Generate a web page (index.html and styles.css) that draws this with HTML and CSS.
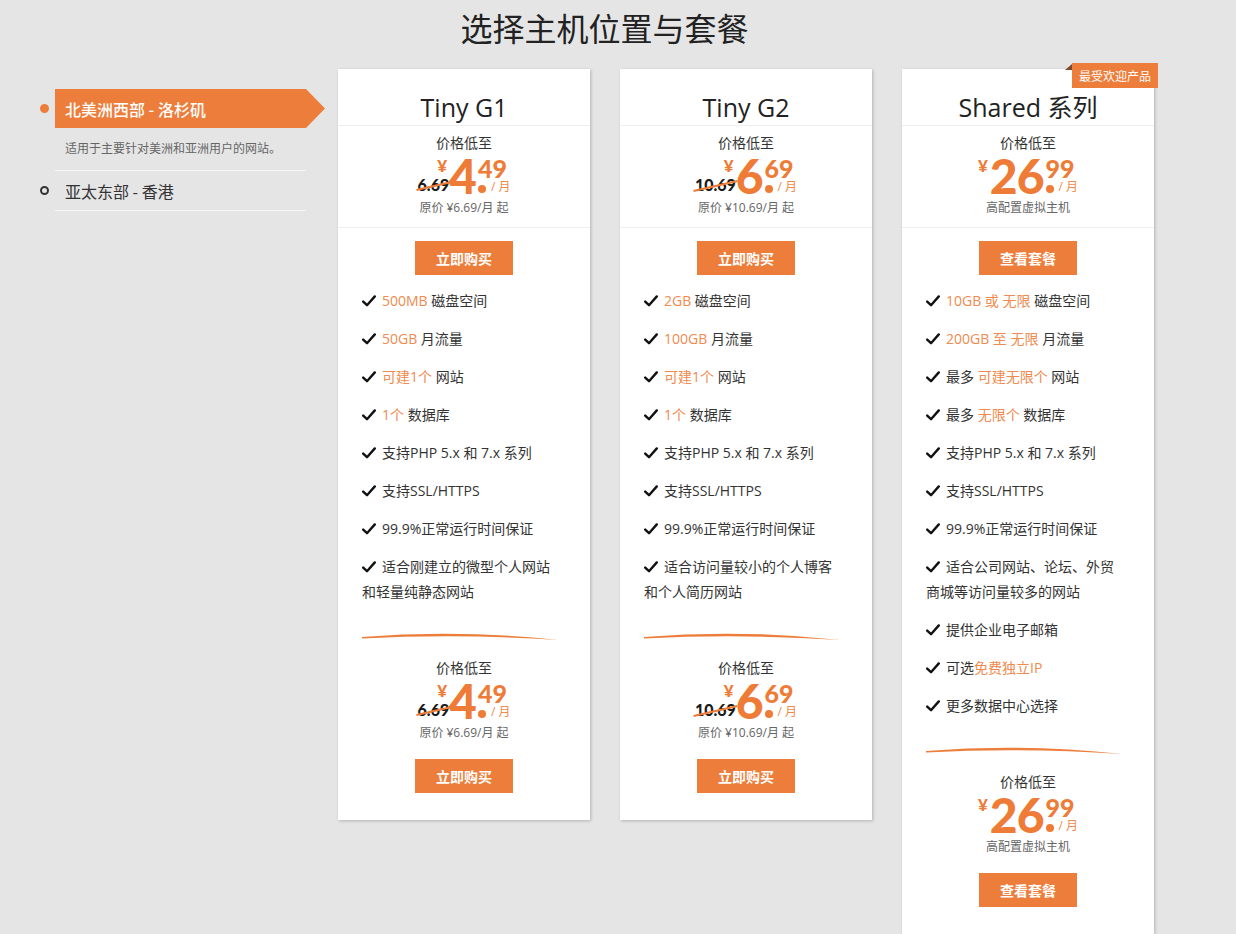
FILE: index.html
```html
<!DOCTYPE html>
<html lang="zh-CN">
<head>
<meta charset="utf-8">
<title>选择主机位置与套餐</title>
<link rel="stylesheet" href="styles.css">
</head>
<body>
<div class="page">
  <h1 class="title">选择主机位置与套餐</h1>
  <div class="main">
    <aside class="regions">
      <div class="region active">
        <div class="region-head"><span class="dot"></span><span class="tab">北美洲西部 - 洛杉矶</span></div>
        <p class="region-desc">适用于主要针对美洲和亚洲用户的网站。</p>
      </div>
      <div class="region">
        <div class="region-head"><span class="dot"></span><span class="name">亚太东部 - 香港</span></div>
      </div>
    </aside>

    <div class="cards">
      <!-- Card 1 -->
      <section class="card">
        <h2 class="card-title">Tiny G1</h2>
        <div class="price-box top">
          <div class="price-label">价格低至</div>
          <div class="price">
            <span class="old">6.69</span><span class="yen">¥</span><span class="int">4</span><span class="frac"><span class="dec">49</span><span class="unit"><i class="pt"></i>/ 月</span></span>
          </div>
          <div class="price-note">原价 ¥6.69/月 起</div>
        </div>
        <div class="btn-row"><a class="btn">立即购买</a></div>
        <ul class="features">
          <li><svg class="chk" viewBox="0 0 14 12"><path d="M1.2 6.6 L5 10.2 L12.8 1.4"/></svg><span class="hl">500MB</span> 磁盘空间</li>
          <li><svg class="chk" viewBox="0 0 14 12"><path d="M1.2 6.6 L5 10.2 L12.8 1.4"/></svg><span class="hl">50GB</span> 月流量</li>
          <li><svg class="chk" viewBox="0 0 14 12"><path d="M1.2 6.6 L5 10.2 L12.8 1.4"/></svg><span class="hl">可建1个</span> 网站</li>
          <li><svg class="chk" viewBox="0 0 14 12"><path d="M1.2 6.6 L5 10.2 L12.8 1.4"/></svg><span class="hl">1个</span> 数据库</li>
          <li><svg class="chk" viewBox="0 0 14 12"><path d="M1.2 6.6 L5 10.2 L12.8 1.4"/></svg>支持PHP 5.x 和 7.x 系列</li>
          <li><svg class="chk" viewBox="0 0 14 12"><path d="M1.2 6.6 L5 10.2 L12.8 1.4"/></svg>支持SSL/HTTPS</li>
          <li><svg class="chk" viewBox="0 0 14 12"><path d="M1.2 6.6 L5 10.2 L12.8 1.4"/></svg>99.9%正常运行时间保证</li>
          <li><svg class="chk" viewBox="0 0 14 12"><path d="M1.2 6.6 L5 10.2 L12.8 1.4"/></svg>适合刚建立的微型个人网站<br>和轻量纯静态网站</li>
        </ul>
        <svg class="swoosh" viewBox="0 0 196 10"><path d="M0 6 Q 96 -2 196 9 Q 96 2.5 0 7.5 Z"/></svg>
        <div class="price-box bottom">
          <div class="price-label">价格低至</div>
          <div class="price">
            <span class="old">6.69</span><span class="yen">¥</span><span class="int">4</span><span class="frac"><span class="dec">49</span><span class="unit"><i class="pt"></i>/ 月</span></span>
          </div>
          <div class="price-note">原价 ¥6.69/月 起</div>
        </div>
        <div class="btn-row bottom"><a class="btn">立即购买</a></div>
      </section>

      <!-- Card 2 -->
      <section class="card">
        <h2 class="card-title">Tiny G2</h2>
        <div class="price-box top">
          <div class="price-label">价格低至</div>
          <div class="price">
            <span class="old">10.69</span><span class="yen">¥</span><span class="int">6</span><span class="frac"><span class="dec">69</span><span class="unit"><i class="pt"></i>/ 月</span></span>
          </div>
          <div class="price-note">原价 ¥10.69/月 起</div>
        </div>
        <div class="btn-row"><a class="btn">立即购买</a></div>
        <ul class="features">
          <li><svg class="chk" viewBox="0 0 14 12"><path d="M1.2 6.6 L5 10.2 L12.8 1.4"/></svg><span class="hl">2GB</span> 磁盘空间</li>
          <li><svg class="chk" viewBox="0 0 14 12"><path d="M1.2 6.6 L5 10.2 L12.8 1.4"/></svg><span class="hl">100GB</span> 月流量</li>
          <li><svg class="chk" viewBox="0 0 14 12"><path d="M1.2 6.6 L5 10.2 L12.8 1.4"/></svg><span class="hl">可建1个</span> 网站</li>
          <li><svg class="chk" viewBox="0 0 14 12"><path d="M1.2 6.6 L5 10.2 L12.8 1.4"/></svg><span class="hl">1个</span> 数据库</li>
          <li><svg class="chk" viewBox="0 0 14 12"><path d="M1.2 6.6 L5 10.2 L12.8 1.4"/></svg>支持PHP 5.x 和 7.x 系列</li>
          <li><svg class="chk" viewBox="0 0 14 12"><path d="M1.2 6.6 L5 10.2 L12.8 1.4"/></svg>支持SSL/HTTPS</li>
          <li><svg class="chk" viewBox="0 0 14 12"><path d="M1.2 6.6 L5 10.2 L12.8 1.4"/></svg>99.9%正常运行时间保证</li>
          <li><svg class="chk" viewBox="0 0 14 12"><path d="M1.2 6.6 L5 10.2 L12.8 1.4"/></svg>适合访问量较小的个人博客<br>和个人简历网站</li>
        </ul>
        <svg class="swoosh" viewBox="0 0 196 10"><path d="M0 6 Q 96 -2 196 9 Q 96 2.5 0 7.5 Z"/></svg>
        <div class="price-box bottom">
          <div class="price-label">价格低至</div>
          <div class="price">
            <span class="old">10.69</span><span class="yen">¥</span><span class="int">6</span><span class="frac"><span class="dec">69</span><span class="unit"><i class="pt"></i>/ 月</span></span>
          </div>
          <div class="price-note">原价 ¥10.69/月 起</div>
        </div>
        <div class="btn-row bottom"><a class="btn">立即购买</a></div>
      </section>

      <!-- Card 3 -->
      <section class="card featured">
        <span class="badge">最受欢迎产品</span>
        <h2 class="card-title">Shared 系列</h2>
        <div class="price-box top">
          <div class="price-label">价格低至</div>
          <div class="price">
            <span class="yen">¥</span><span class="int">26</span><span class="frac"><span class="dec">99</span><span class="unit"><i class="pt"></i>/ 月</span></span>
          </div>
          <div class="price-note">高配置虚拟主机</div>
        </div>
        <div class="btn-row"><a class="btn">查看套餐</a></div>
        <ul class="features">
          <li><svg class="chk" viewBox="0 0 14 12"><path d="M1.2 6.6 L5 10.2 L12.8 1.4"/></svg><span class="hl">10GB 或 无限</span> 磁盘空间</li>
          <li><svg class="chk" viewBox="0 0 14 12"><path d="M1.2 6.6 L5 10.2 L12.8 1.4"/></svg><span class="hl">200GB 至 无限</span> 月流量</li>
          <li><svg class="chk" viewBox="0 0 14 12"><path d="M1.2 6.6 L5 10.2 L12.8 1.4"/></svg>最多 <span class="hl">可建无限个</span> 网站</li>
          <li><svg class="chk" viewBox="0 0 14 12"><path d="M1.2 6.6 L5 10.2 L12.8 1.4"/></svg>最多 <span class="hl">无限个</span> 数据库</li>
          <li><svg class="chk" viewBox="0 0 14 12"><path d="M1.2 6.6 L5 10.2 L12.8 1.4"/></svg>支持PHP 5.x 和 7.x 系列</li>
          <li><svg class="chk" viewBox="0 0 14 12"><path d="M1.2 6.6 L5 10.2 L12.8 1.4"/></svg>支持SSL/HTTPS</li>
          <li><svg class="chk" viewBox="0 0 14 12"><path d="M1.2 6.6 L5 10.2 L12.8 1.4"/></svg>99.9%正常运行时间保证</li>
          <li><svg class="chk" viewBox="0 0 14 12"><path d="M1.2 6.6 L5 10.2 L12.8 1.4"/></svg>适合公司网站、论坛、外贸<br>商城等访问量较多的网站</li>
          <li><svg class="chk" viewBox="0 0 14 12"><path d="M1.2 6.6 L5 10.2 L12.8 1.4"/></svg>提供企业电子邮箱</li>
          <li><svg class="chk" viewBox="0 0 14 12"><path d="M1.2 6.6 L5 10.2 L12.8 1.4"/></svg>可选<span class="hl">免费独立IP</span></li>
          <li><svg class="chk" viewBox="0 0 14 12"><path d="M1.2 6.6 L5 10.2 L12.8 1.4"/></svg>更多数据中心选择</li>
        </ul>
        <svg class="swoosh" viewBox="0 0 196 10"><path d="M0 6 Q 96 -2 196 9 Q 96 2.5 0 7.5 Z"/></svg>
        <div class="price-box bottom">
          <div class="price-label">价格低至</div>
          <div class="price">
            <span class="yen">¥</span><span class="int">26</span><span class="frac"><span class="dec">99</span><span class="unit"><i class="pt"></i>/ 月</span></span>
          </div>
          <div class="price-note">高配置虚拟主机</div>
        </div>
        <div class="btn-row bottom"><a class="btn">查看套餐</a></div>
      </section>
    </div>
  </div>
</div>
</body>
</html>
```

FILE: styles.css
```css
* { box-sizing: border-box; }

html, body {
  margin: 0;
  padding: 0;
  background: #e5e5e5;
}

body {
  font-family: "Open Sans", "Noto Sans CJK SC", sans-serif;
  color: #333;
  font-size: 14px;
}

.page {
  width: 1236px;
}

.title {
  margin: 0;
  padding: 7px 27px 0 0;
  height: 69px;
  font-family: "Noto Sans CJK SC", sans-serif;
  font-weight: 400;
  font-size: 32px;
  line-height: 40px;
  color: #222;
  text-align: center;
}

.main {
  display: flex;
  align-items: flex-start;
}

/* ---------- regions sidebar ---------- */
.regions {
  width: 338px;
  padding: 20px 0 0 55px;
}

.region {
  width: 251px;
  border-bottom: 1px solid #f7f7f7;
}

.region-head {
  display: flex;
  align-items: center;
  height: 39px;
  margin-left: -15px;
}

.dot {
  width: 9px;
  height: 9px;
  border-radius: 50%;
  margin-right: 6px;
  flex: none;
  border: 2px solid #333;
}

.region.active .dot {
  background: #ed7d3a;
  border-color: #ed7d3a;
}

.tab {
  display: flex;
  align-items: center;
  width: 270px;
  height: 39px;
  padding-left: 10px;
  margin-right: -19px;
  background: #ed7d3a;
  color: #fff;
  font-family: "Noto Sans CJK SC", sans-serif;
  font-size: 16px;
  font-weight: 500;
  clip-path: polygon(0 0, 251px 0, 100% 50%, 251px 100%, 0 100%);
}

.name {
  padding-left: 10px;
  font-family: "Noto Sans CJK SC", sans-serif;
  font-size: 16px;
  color: #333;
}

.region-desc {
  margin: 0;
  padding: 11px 0 13px 10px;
  font-family: "Noto Sans CJK SC", sans-serif;
  font-size: 12px;
  line-height: 18px;
  color: #666;
}

/* ---------- cards ---------- */
.cards {
  display: flex;
  align-items: flex-start;
  gap: 30px;
}

.card {
  position: relative;
  width: 252px;
  background: #fff;
  box-shadow: 1px 1px 3px rgba(0, 0, 0, 0.22);
  padding-bottom: 27px;
}

.card-title {
  margin: 0;
  height: 57px;
  padding-top: 22px;
  border-bottom: 1px solid #eee;
  font-size: 25px;
  font-weight: 400;
  line-height: 32px;
  color: #222;
  text-align: center;
}

.badge {
  position: absolute;
  top: -6px;
  right: -4px;
  height: 25px;
  padding: 0 7px;
  background: #ed7d3a;
  color: #fff;
  font-family: "Noto Sans CJK SC", sans-serif;
  font-size: 12px;
  line-height: 25px;
}

.badge::before {
  content: "";
  position: absolute;
  left: -7px;
  top: 1px;
  border-left: 7px solid transparent;
  border-bottom: 6px solid #7a4a2c;
}

.price-box {
  text-align: center;
}

.price-box.top {
  padding: 6px 0 10px;
  border-bottom: 1px solid #eee;
}

.price-box.bottom {
  padding-top: 16px;
}

.price-label {
  font-family: "Noto Sans CJK SC", sans-serif;
  font-size: 14px;
  line-height: 20px;
  color: #333;
}

.price {
  display: flex;
  justify-content: center;
  align-items: flex-start;
  height: 36px;
  margin-top: 6px;
  color: #ee7b36;
  font-family: "Lato", "Open Sans", sans-serif;
}

.old {
  position: relative;
  align-self: flex-end;
  margin-right: -12px;
  margin-bottom: 1px;
  font-size: 16px;
  font-weight: 900;
  line-height: 16px;
  color: #1a1a1a;
}

.old::after {
  content: "";
  position: absolute;
  left: -2px;
  right: -2px;
  top: 8px;
  height: 2px;
  background: #ee7b36;
  transform: rotate(-13deg);
}

.yen {
  position: relative;
  font-size: 17px;
  font-weight: 900;
  line-height: 16px;
  margin-top: 0;
  margin-right: 2px;
}

.int {
  font-size: 48px;
  font-weight: 900;
  line-height: 35px;
  letter-spacing: -1px;
}

.frac {
  display: flex;
  flex-direction: column;
  align-items: flex-start;
  margin-left: 2px;
}

.dec {
  font-size: 25px;
  font-weight: 900;
  line-height: 20px;
}

.unit {
  display: flex;
  align-items: center;
  margin-top: 2px;
  font-family: "Open Sans", "Noto Sans CJK SC", sans-serif;
  font-size: 12px;
  line-height: 14px;
  color: #ef8a4c;
  white-space: nowrap;
}

.pt {
  width: 8px;
  height: 8px;
  border-radius: 50%;
  background: #ee7b36;
  margin: 4px 5px 0 0;
}

.price-note {
  margin-top: 5px;
  font-family: "Open Sans", "Noto Sans CJK SC", sans-serif;
  font-size: 12px;
  line-height: 18px;
  color: #666;
}

.btn-row {
  display: flex;
  justify-content: center;
  margin-top: 13px;
}

.btn-row.bottom {
  margin-top: 17px;
}

.btn {
  display: flex;
  align-items: center;
  justify-content: center;
  width: 98px;
  height: 34px;
  background: #ed7d3a;
  color: #fff;
  font-family: "Noto Sans CJK SC", sans-serif;
  font-size: 14px;
  font-weight: 700;
  text-decoration: none;
}

.features {
  list-style: none;
  margin: 0;
  padding: 13px 24px 0;
}

.features li {
  font-size: 14px;
  line-height: 25px;
  color: #333;
  margin-bottom: 13px;
}

.features li:last-child {
  margin-bottom: 0;
}

.chk {
  width: 14px;
  height: 12px;
  margin-right: 6px;
  vertical-align: -1px;
  fill: none;
  stroke: #111;
  stroke-width: 2.4;
  stroke-linecap: round;
  stroke-linejoin: round;
}

.hl {
  color: #f08a4e;
}

.swoosh {
  display: block;
  width: 196px;
  height: 10px;
  margin: 27px 0 0 24px;
  fill: #ed7d3a;
}
```
